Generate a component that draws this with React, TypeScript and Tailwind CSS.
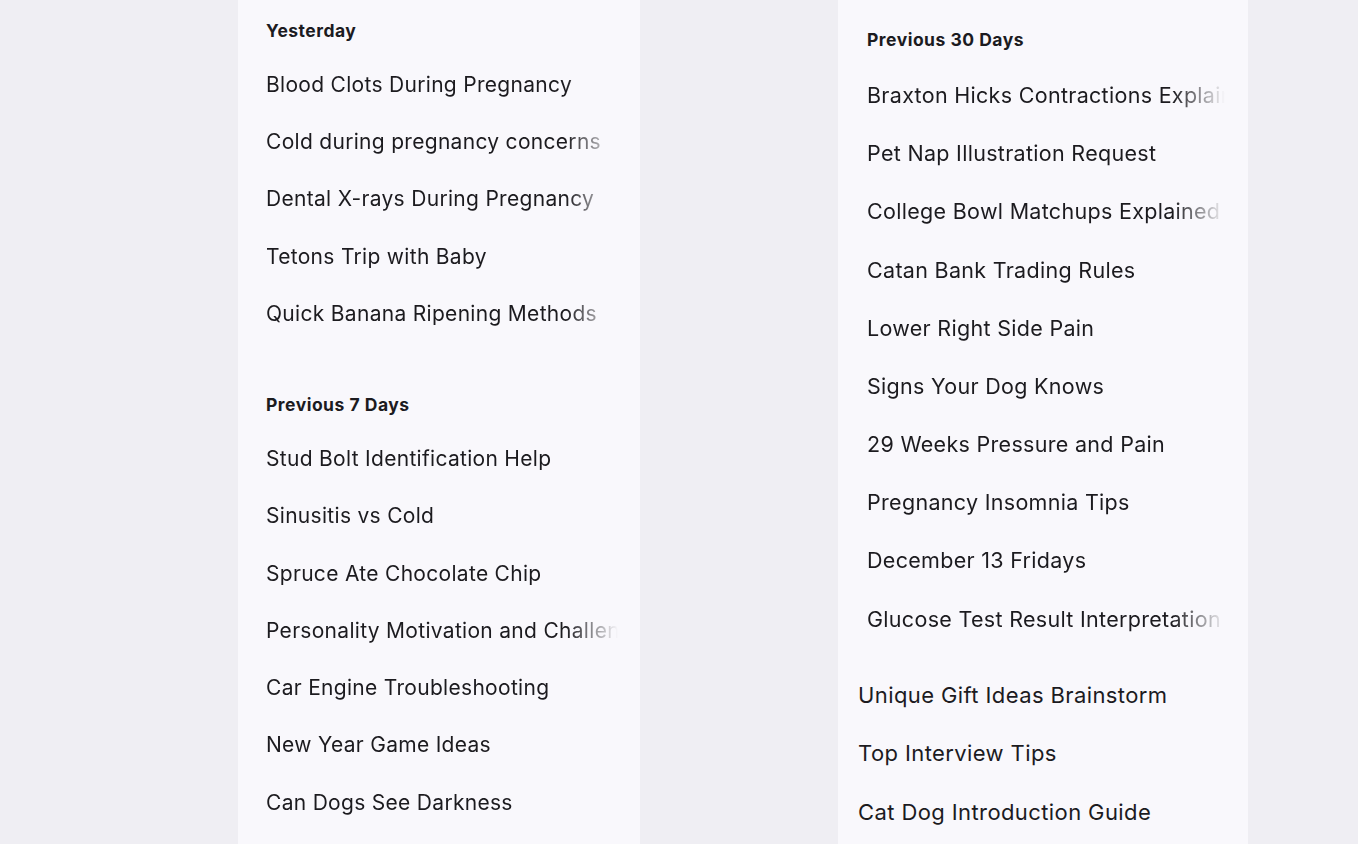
const yesterday = [
  "Blood Clots During Pregnancy",
  "Cold during pregnancy concerns",
  "Dental X-rays During Pregnancy",
  "Tetons Trip with Baby",
  "Quick Banana Ripening Methods",
];

const prev7 = [
  "Stud Bolt Identification Help",
  "Sinusitis vs Cold",
  "Spruce Ate Chocolate Chip",
  "Personality Motivation and Challenges",
  "Car Engine Troubleshooting",
  "New Year Game Ideas",
  "Can Dogs See Darkness",
];

const prev30 = [
  "Braxton Hicks Contractions Explained",
  "Pet Nap Illustration Request",
  "College Bowl Matchups Explained",
  "Catan Bank Trading Rules",
  "Lower Right Side Pain",
  "Signs Your Dog Knows",
  "29 Weeks Pressure and Pain",
  "Pregnancy Insomnia Tips",
  "December 13 Fridays",
  "Glucose Test Result Interpretation",
];

const older = ["Unique Gift Ideas Brainstorm", "Top Interview Tips", "Cat Dog Introduction Guide"];

// fades the end of long titles instead of an ellipsis
const fade = "[mask-image:linear-gradient(to_right,black_calc(100%-52px),transparent)]";

function Heading({ children }: { children: string }) {
  return (
    <div className="flex h-[36px] items-center text-[17.5px] font-bold tracking-[0.5px] text-[#1c1b1f]">
      {children}
    </div>
  );
}

export default function App() {
  return (
    <div
      className="flex h-[844px] gap-[198px] overflow-hidden bg-[#efeef3] pl-[238px]"
      style={{ fontFamily: "Inter, 'Noto Sans', sans-serif" }}
    >
      {/* left column */}
      <div className="w-[402px] bg-[#f9f8fc] pl-[28px] pr-[22px]">
        <div className="mt-[13px]">
          <Heading>Yesterday</Heading>
        </div>
        <div className="mt-[7px]">
          {yesterday.map((t) => (
            <div
              key={t}
              className={`flex h-[57.25px] items-center overflow-hidden whitespace-nowrap text-[21px] tracking-[0.3px] text-[#1c1b1f] ${fade}`}
            >
              {t}
            </div>
          ))}
        </div>
        <div className="mt-[45px]">
          <Heading>Previous 7 Days</Heading>
        </div>
        <div className="mt-[7px]">
          {prev7.map((t) => (
            <div
              key={t}
              className={`flex h-[57.25px] items-center overflow-hidden whitespace-nowrap text-[21px] tracking-[0.3px] text-[#1c1b1f] ${fade}`}
            >
              {t}
            </div>
          ))}
        </div>
      </div>

      {/* right column */}
      <div className="w-[410px] bg-[#f9f8fc] pl-[20px] pr-[23px]">
        <div className="pl-[9px]">
          <div className="mt-[22px]">
            <Heading>Previous 30 Days</Heading>
          </div>
          <div className="mt-[8px]">
            {prev30.map((t) => (
              <div
                key={t}
                className={`flex h-[58.2px] items-center overflow-hidden whitespace-nowrap text-[21.5px] tracking-[0.3px] text-[#1c1b1f] ${fade}`}
              >
                {t}
              </div>
            ))}
          </div>
        </div>
        <div className="mt-[18px]">
          {older.map((t) => (
            <div
              key={t}
              className="flex h-[58.5px] items-center whitespace-nowrap text-[22px] tracking-[0.4px] text-[#1c1b1f]"
            >
              {t}
            </div>
          ))}
        </div>
      </div>
    </div>
  );
}
